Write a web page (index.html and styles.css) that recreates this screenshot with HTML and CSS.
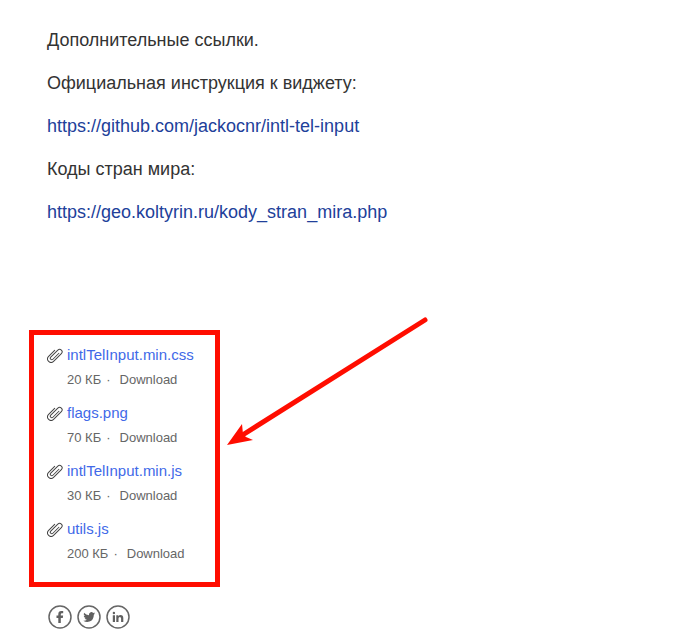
FILE: index.html
```html
<!DOCTYPE html>
<html lang="ru">
<head>
<meta charset="utf-8">
<title>Дополнительные ссылки</title>
<link rel="stylesheet" href="styles.css">
</head>
<body>
<svg class="sprite" aria-hidden="true">
  <symbol id="clip" viewBox="0 0 16 16">
    <path transform="rotate(-45 8 8)" d="M12 9.500H3.500a1.500 1.500 0 0 1 0-3H13.500a2.500 2.500 0 0 1 0 5H2.500a3.500 3.500 0 0 1 0-7H11" fill="none" stroke="currentColor" stroke-width="1" stroke-linecap="round"/>
  </symbol>
</svg>
<main class="page">
  <article class="article">
    <p>Дополнительные ссылки.</p>
    <p>Официальная инструкция к виджету:</p>
    <p><a href="https://github.com/jackocnr/intl-tel-input">https://github.com/jackocnr/intl-tel-input</a></p>
    <p>Коды стран мира:</p>
    <p><a href="https://geo.koltyrin.ru/kody_stran_mira.php">https://geo.koltyrin.ru/kody_stran_mira.php</a></p>
  </article>

  <section class="attachments">
    <ul class="files">
      <li class="file">
        <svg class="clip" aria-hidden="true"><use href="#clip"/></svg>
        <a class="name" href="#">intlTelInput.min.css</a>
        <div class="meta"><span>20 КБ</span><span class="dot">·</span><a href="#">Download</a></div>
      </li>
      <li class="file">
        <svg class="clip" aria-hidden="true"><use href="#clip"/></svg>
        <a class="name" href="#">flags.png</a>
        <div class="meta"><span>70 КБ</span><span class="dot">·</span><a href="#">Download</a></div>
      </li>
      <li class="file">
        <svg class="clip" aria-hidden="true"><use href="#clip"/></svg>
        <a class="name" href="#">intlTelInput.min.js</a>
        <div class="meta"><span>30 КБ</span><span class="dot">·</span><a href="#">Download</a></div>
      </li>
      <li class="file">
        <svg class="clip" aria-hidden="true"><use href="#clip"/></svg>
        <a class="name" href="#">utils.js</a>
        <div class="meta"><span>200 КБ</span><span class="dot">·</span><a href="#">Download</a></div>
      </li>
    </ul>
    <svg class="arrow" viewBox="0 0 204 132" aria-hidden="true">
      <path d="M200 5 16 121" stroke="currentColor" stroke-width="5" stroke-linecap="round"/>
      <path d="M2 130 17 109 18 119 21 122 28 125Z" fill="currentColor"/>
    </svg>
  </section>

  <nav class="social">
    <a href="#" aria-label="Facebook"><svg viewBox="0 0 24 24"><circle cx="12" cy="12" r="11"/><path d="M10.300 18V12.900H8.500V10.500h1.800V9.200q0-3.200 3-3.200h1.900v2.300h-1.300q-1.100 0-1.100 1.100v1.100h2.300l-.3 2.400h-2V18Z"/></svg></a>
    <a href="#" aria-label="Twitter"><svg viewBox="0 0 24 24"><circle cx="12" cy="12" r="11"/><path transform="translate(-1.200 -1.200) scale(1.100)" d="M17.500 8.700q-.5.3-1.200.4.700-.4.900-1.200-.7.400-1.400.5a2.200 2.200 0 0 0-3.800 2q-2.700-.1-4.500-2.300-.9 1.800.7 3-.6 0-1-.3.1 1.700 1.800 2.200-.5.100-1 0 .5 1.400 2.100 1.500-1.400 1.100-3.300.9 2.700 1.700 5.600.8 3.900-1.300 4-6.300.7-.5 1.100-1.200Z"/></svg></a>
    <a href="#" aria-label="LinkedIn"><svg viewBox="0 0 24 24"><circle cx="12" cy="12" r="11"/><path d="M6.800 10.300H9V17H6.800ZM7.900 6.800a1.200 1.200 0 1 1 0 2.400A1.200 1.200 0 0 1 7.900 6.800ZM10.300 10.300h2.100v.9q.7-1.100 2.200-1.100 2.700 0 2.700 2.900v4h-2.200v-3.600q0-1.500-1.200-1.500-1.400 0-1.400 1.600V17h-2.200Z"/></svg></a>
  </nav>
</main>
</body>
</html>
```
FILE: styles.css
```css
body {
  margin: 0;
  background: #fff;
  color: #333;
  font-family: "Liberation Sans", Arial, sans-serif;
}

a {
  color: inherit;
  text-decoration: none;
}

.sprite {
  position: absolute;
  width: 0;
  height: 0;
}

.page {
  padding: 28px 29px 10px;
}

.article {
  display: flex;
  flex-direction: column;
  gap: 18px;
  padding: 0 18px;
  font-size: 18px;
  line-height: 25px;
}

.article p {
  margin: 0;
}

.article a {
  color: #21409a;
}

.attachments {
  position: relative;
  width: fit-content;
  margin-top: 105px;
}

.files {
  display: flex;
  flex-direction: column;
  gap: 13px;
  margin: 0;
  padding: 10px 21px 18px 13px;
  border: 5px solid #ff0d00;
  list-style: none;
}

.file {
  display: grid;
  grid-template-columns: 16px auto;
  gap: 5px 4px;
  align-items: center;
  line-height: 20px;
}

.clip {
  width: 16px;
  height: 16px;
  color: #444;
}

.name {
  color: #4169e8;
  font-size: 15px;
}

.meta {
  grid-column: 2;
  color: #666;
  font-size: 13px;
}

.dot {
  margin: 0 9px 0 5px;
}

.arrow {
  position: absolute;
  top: -15px;
  left: 100%;
  width: 204px;
  height: 132px;
  margin-left: 5px;
  color: #ff0d00;
}

.social {
  display: flex;
  gap: 5px;
  margin-top: 18px;
  padding: 0 19px;
}

.social svg {
  display: block;
  width: 24px;
  height: 24px;
  fill: #606060;
}

.social circle {
  fill: none;
  stroke: #666;
  stroke-width: 1.5;
}
```
